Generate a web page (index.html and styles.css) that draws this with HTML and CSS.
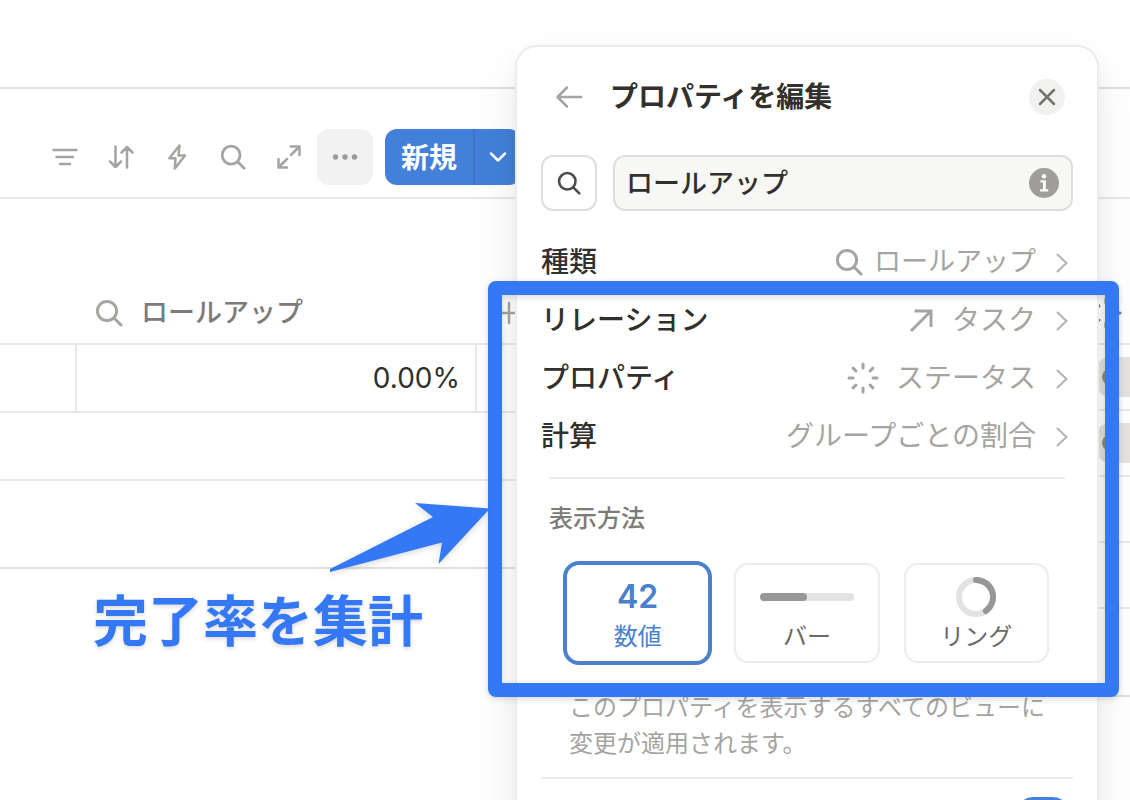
FILE: index.html
```html
<!DOCTYPE html>
<html lang="ja">
<head>
<meta charset="utf-8">
<meta name="viewport" content="width=device-width, initial-scale=1">
<title>プロパティを編集</title>
<link rel="stylesheet" href="styles.css">
</head>
<body>
<svg class="defs" aria-hidden="true">
  <symbol id="search" viewBox="0 0 28 28"><circle cx="12" cy="12" r="9.6"/><path d="M19 19l7 7"/></symbol>
  <symbol id="chevron" viewBox="0 0 12 20"><path d="M1.500 1.500L10.500 10l-9 8.500"/></symbol>
  <symbol id="status" viewBox="0 0 32 32"><path d="M16 2v4M16 26v4M2 16h4M26 16h4M6.100 6.100l2.900 2.900M23 23l2.900 2.900M25.900 6.100L23 9M9 23l-2.900 2.900"/></symbol>
</svg>
<main class="scene">
  <div class="topbar"></div>
  <div class="toolbar">
    <button class="tool" aria-label="フィルター"><svg class="icon i28" viewBox="0 0 28 28"><path d="M2.500 7h23M5.500 14h16.500M9 21h10"/></svg></button>
    <button class="tool" aria-label="並べ替え"><svg class="icon i28" viewBox="0 0 28 28"><path d="M8.500 3.500V24M3 18.500L8.500 24l5.500-5.500M20 24.500V4M14.500 9.500L20 4l5.500 5.500"/></svg></button>
    <button class="tool" aria-label="オートメーション"><svg class="icon i28" viewBox="0 0 28 28"><path d="M16.500 2.500L6.300 15.300h6.200L11.800 25.500 22 12.500h-6.500z"/></svg></button>
    <button class="tool" aria-label="検索"><svg class="icon i26 thick"><use href="#search"/></svg></button>
    <button class="tool" aria-label="展開"><svg class="icon i28" viewBox="0 0 28 28"><path d="M16 12l8.500-8.500M16 3.500h8.500V12M12 16l-8.500 8.500M3.500 16v8.500H12"/></svg></button>
    <button class="tool more" aria-label="その他"><svg class="icon dots i28" viewBox="0 0 28 28"><circle cx="4.500" cy="14" r="2.700"/><circle cx="14" cy="14" r="2.700"/><circle cx="23.500" cy="14" r="2.700"/></svg></button>
    <div class="split">
      <button class="new">新規</button><button class="newmenu" aria-label="新規メニュー"><svg class="icon caret" viewBox="0 0 18 12"><path d="M2 2.500L9 9.500l7-7"/></svg></button>
    </div>
  </div>
  <div class="tables">
    <table class="grid">
      <colgroup><col class="c1"><col class="c2"><col></colgroup>
      <tr><th></th><th><span class="colname"><svg class="icon i28 thick"><use href="#search"/></svg>ロールアップ</span></th><th><button class="add" aria-label="列を追加"><svg class="icon i24" viewBox="0 0 24 24"><path d="M12 2v20M2 12h20"/></svg></button></th></tr>
      <tr class="data"><td></td><td>0.00%</td><td></td></tr>
      <tr class="blank"><td colspan="3"></td></tr>
      <tr class="foot"><td colspan="3"></td></tr>
    </table>
    <table class="grid side">
      <tr><th><span class="status"><svg class="icon i32 dark"><use href="#status"/></svg></span></th></tr>
      <tr><td><span class="pill"></span></td></tr>
      <tr><td><span class="pill"></span></td></tr>
      <tr><td></td></tr>
      <tr><td></td></tr>
      <tr class="foot"><td></td></tr>
    </table>
  </div>

  <section class="panel" aria-labelledby="title">
    <header class="head">
      <button class="back" aria-label="戻る"><svg class="icon i28" viewBox="0 0 28 28"><path d="M12 4.500L2.500 14l9.500 9.500M3 14h23"/></svg></button>
      <h1 id="title">プロパティを編集</h1>
      <button class="close" aria-label="閉じる"><svg class="icon i20" viewBox="0 0 20 20"><path d="M3 3l14 14M17 3L3 17"/></svg></button>
    </header>
    <div class="fields">
      <button class="iconbtn" aria-label="アイコン"><svg class="icon i24"><use href="#search"/></svg></button>
      <div class="name">
        <input type="text" value="ロールアップ" aria-label="プロパティ名">
        <svg class="info" viewBox="0 0 30 30"><circle class="disc" cx="15" cy="15" r="15"/><circle class="mark" cx="15" cy="8.200" r="2.200"/><path class="mark" d="M11.500 12.300h5.300v9h2.500v2.200h-8.200v-2.200h2.900v-6.800h-2.500z"/></svg>
      </div>
    </div>
    <div class="rows">
      <button class="row"><span>種類</span><span class="val"><svg class="icon i28 thick"><use href="#search"/></svg><span class="compact">ロールアップ</span></span><svg class="chev"><use href="#chevron"/></svg></button>
      <button class="row"><span>リレーション</span><span class="val wide"><svg class="icon i28 arrow" viewBox="0 0 28 28"><path d="M4 25L24 5M7.500 5H24v16"/></svg><span>タスク</span></span><svg class="chev"><use href="#chevron"/></svg></button>
      <button class="row"><span>プロパティ</span><span class="val wide"><svg class="icon i32 thick"><use href="#status"/></svg><span>ステータス</span></span><svg class="chev"><use href="#chevron"/></svg></button>
      <button class="row"><span>計算</span><span class="val"><span>グループごとの割合</span></span><svg class="chev"><use href="#chevron"/></svg></button>
    </div>
    <fieldset class="display">
      <legend>表示方法</legend>
      <div class="cards">
        <label class="card"><input type="radio" name="view" checked><span class="sample">42</span><span>数値</span></label>
        <label class="card"><input type="radio" name="view"><span class="sample"><span class="bar"></span></span><span>バー</span></label>
        <label class="card"><input type="radio" name="view"><span class="sample"><svg class="ring" viewBox="0 0 40 40"><circle cx="20" cy="20" r="17"/><path d="M20 3A17 17 0 0 1 29.700 34"/></svg></span><span>リング</span></label>
      </div>
    </fieldset>
    <p class="note">このプロパティを表示するすべてのビューに変更が適用されます。</p>
    <div class="option"><input type="checkbox" class="switch" aria-label="オプション" checked></div>
  </section>

  <div class="frame"></div>
  <svg class="pointer" viewBox="0 0 162 72"><path d="M86 1L161 6.500 109.500 62l3.500-21.500L1 70V67L104 15z"/></svg>
  <p class="callout">完了率を集計</p>
</main>
</body>
</html>
```
FILE: styles.css
```css
* { box-sizing: border-box; }
body {
  margin: 0;
  background: #fff;
  color: #32302c;
  font-family: Inter, "Noto Sans CJK JP", sans-serif;
  font-size: 28px;
  font-weight: 500;
}
button, input { font: inherit; color: inherit; }
button { border: 0; padding: 0; background: none; cursor: pointer; }
.defs { display: none; }
.scene { position: relative; height: 100vh; overflow: hidden; }

.icon { fill: none; stroke: #a5a4a0; stroke-width: 2.5; stroke-linecap: round; stroke-linejoin: round; flex: none; }
.thick { stroke-width: 3; }
.i20 { width: 20px; height: 20px; }
.i24 { width: 24px; height: 24px; }
.i26 { width: 26px; height: 26px; }
.i28 { width: 28px; height: 28px; }
.i32 { width: 32px; height: 32px; }

.topbar { height: 89px; border-bottom: 2px solid #dfdfde; }
.toolbar { display: flex; height: 110px; padding: 40px 0 0 37px; border-bottom: 2px solid #e8e8e7; }
.tool { display: grid; place-items: center; width: 56px; height: 56px; border-radius: 12px; }
.more { background: #f2f2f2; }
.dots { fill: #9b9a97; stroke: none; }
.split { display: flex; height: 56px; margin-left: 12px; border-radius: 12px; background: #4280d9; color: #fff; overflow: hidden; }
.new { width: 90px; padding-bottom: 2px; font-weight: 700; border-right: 2px solid #3a72c4; }
.newmenu { display: grid; place-items: center; width: 46px; }
.caret { width: 18px; height: 12px; stroke: #fff; }

.tables { display: grid; grid-template-columns: 1fr 48px; }
.grid { width: 100%; border-collapse: separate; border-spacing: 0; table-layout: fixed; font-weight: 400; align-self: start; }
.grid th, .grid td { padding: 0; border-bottom: 2px solid #e8e8e7; }
.grid th { height: 146px; padding-bottom: 10px; vertical-align: bottom; text-align: left; color: #7d7b77; font-weight: 500; }
.c1 { width: 77px; }
.c2 { width: 400px; }
.colname { display: flex; align-items: center; gap: 18px; height: 40px; padding-left: 18px; font-size: 27px; line-height: 40px; }
.add { display: grid; place-items: center; width: 64px; height: 40px; }
.grid .data td { height: 68px; border-right: 2px solid #e8e8e7; padding-right: 15px; text-align: right; }
.grid .blank td { height: 68px; }
.grid .foot td { height: 88px; border-color: #dfdfde; }
.side td { height: 66px; }
.status { display: flex; align-items: center; height: 40px; padding-left: 8px; }
.dark { stroke: #7d7b77; stroke-width: 3; }
.pill { display: flex; align-items: center; height: 40px; margin-left: 14px; padding-left: 6px; border-radius: 14px 0 0 14px; background: #e3e2e0; }
.pill::before { content: ""; width: 16px; height: 16px; border-radius: 50%; background: #8e8d89; }

.panel {
  position: absolute;
  top: 45px;
  left: 515px;
  width: 584px;
  padding: 30px 24px 24px;
  border: 2px solid #ececeb;
  border-radius: 22px;
  background: #fff;
  background-clip: padding-box;
  box-shadow: 0 24px 48px rgba(0, 0, 0, .08), 0 6px 20px rgba(0, 0, 0, .04);
}
.head { display: flex; align-items: center; height: 40px; padding: 0 8px 0 14px; }
.back { display: grid; }
.head h1 { flex: 1; margin: 0 0 0 27px; font-size: 28px; line-height: 40px; font-weight: 700; }
.close { display: grid; place-items: center; width: 36px; height: 36px; border-radius: 50%; background: #f1f1f0; }
.close .icon { stroke: #73726e; }
.fields { display: flex; gap: 16px; margin-top: 38px; }
.iconbtn, .name { height: 56px; border: 2px solid #dededc; border-radius: 12px; }
.iconbtn { flex: none; display: grid; place-items: center; width: 56px; }
.iconbtn .icon { stroke: #4d4c49; stroke-width: 3; }
.name { display: flex; align-items: center; flex: 1; min-width: 0; padding: 0 12px 0 11px; background: #f7f7f6; }
.name input { flex: 1; width: 0; min-width: 0; height: 52px; padding: 0 0 4px; border: 0; outline: 0; background: none; font-size: 27px; }
.info { flex: none; width: 30px; height: 30px; }
.disc { fill: #9f9e9a; }
.mark { fill: #fff; }

.rows { margin-top: 22px; }
.row { display: flex; align-items: center; width: 100%; height: 58px; padding-right: 5px; line-height: 40px; text-align: left; }
.val { display: flex; align-items: center; gap: 11px; margin-left: auto; color: #a5a4a0; font-weight: 400; }
.compact { font-size: 27px; }
.wide { gap: 17px; }
.arrow { stroke-width: 3; stroke-linecap: butt; stroke-linejoin: miter; }
.chev { width: 12px; height: 20px; margin: 2px 0 0 20px; fill: none; stroke: #b4b3af; stroke-width: 2; stroke-linecap: round; }

.display { margin: 12px 8px 0; padding: 0; border: 0; border-top: 2px solid #ececeb; min-width: 0; }
.display legend { float: left; width: 100%; padding: 0; margin: 21px 0 25px; font-size: 24px; line-height: 38px; color: #7d7b77; }
.cards { clear: both; display: grid; grid-template-columns: repeat(3, 1fr); gap: 24px; padding: 0 16px; }
.card { display: flex; flex-direction: column; align-items: center; height: 100px; padding-top: 10px; border: 2px solid #ececeb; border-radius: 14px; font-size: 24px; line-height: 36px; font-weight: 400; color: #6b6a66; }
.card input { position: absolute; opacity: 0; pointer-events: none; }
.card:has(input:checked) { height: 104px; margin: -2px; border: 4px solid #4a80cc; border-radius: 16px; color: #4a80cc; }
.sample { display: grid; place-items: center; width: 94px; height: 44px; font-size: 32px; font-weight: 600; }
.bar { width: 94px; height: 8px; border-radius: 4px; background: #e2e2e2; }
.bar::before { content: ""; display: block; width: 50%; height: 8px; border-radius: 4px; background: #979797; }
.ring { width: 40px; height: 40px; fill: none; stroke: #e2e2e2; stroke-width: 6; }
.ring path { stroke: #979797; stroke-linecap: round; }
.note { margin: 27px 0 0; padding: 0 20px 15px 28px; font-size: 24px; line-height: 36px; font-weight: 400; color: #a5a4a0; }
.option { display: flex; justify-content: flex-end; padding: 18px 4px 0; border-top: 2px solid #ececeb; }
.switch { appearance: none; width: 52px; height: 32px; margin: 0; border-radius: 16px; background: #4280d9; }

.frame { position: absolute; top: 281px; left: 488px; width: 631px; height: 416px; border: 14px solid #3478f6; border-radius: 8px; filter: drop-shadow(0 2px 3px rgba(0, 0, 0, .15)); }
.pointer { position: absolute; top: 502px; left: 329px; width: 162px; height: 72px; fill: #3478f6; filter: drop-shadow(0 2px 3px rgba(0, 0, 0, .15)); }
.callout { position: absolute; top: 581px; left: 93px; margin: 0; font-size: 55px; line-height: 80px; font-weight: 700; color: #3478f6; text-shadow: 0 2px 4px rgba(0, 0, 0, .15); white-space: nowrap; }
```
